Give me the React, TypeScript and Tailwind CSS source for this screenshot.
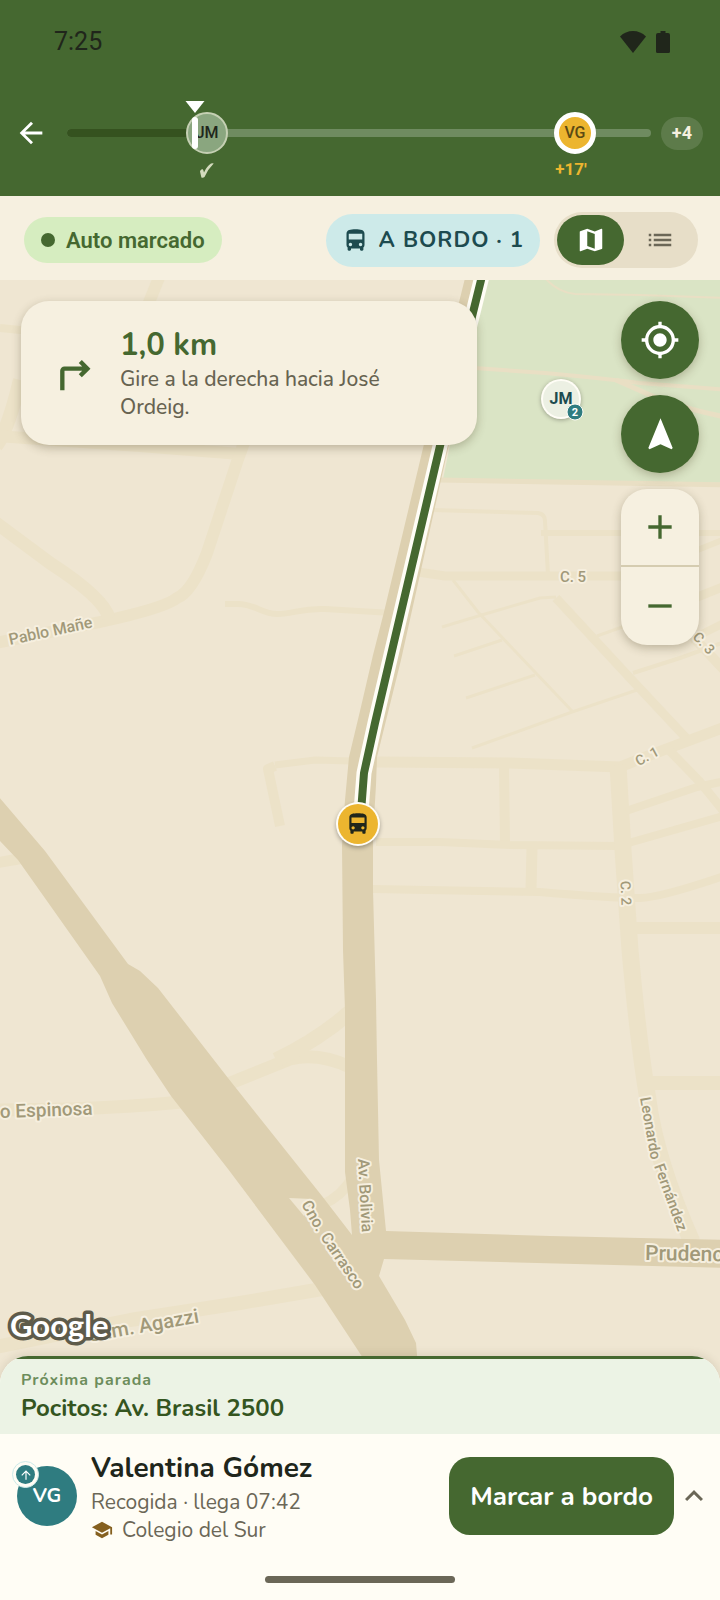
import { MdArrowBack, MdDirectionsBus, MdMap, MdList, MdTurnRight, MdMyLocation, MdNavigation, MdAdd, MdRemove, MdSchool, MdKeyboardArrowUp, MdArrowUpward } from "react-icons/md";

const minorRoads: [string, number][] = [
  ["M162 270 L146 310", 12],
  ["M0 328 L30 331", 8],
  ["M20 380 Q8 430 -4 446", 14],
  ["M-4 436 L140 446 L240 454", 12],
  ["M245 440 L237 462 L207 553 Q192 592 177 598 Q165 608 100 622 L-4 643", 12],
  ["M-4 523 L50 563 Q104 598 109 618", 13],
  ["M225 604 L238 604 C255 604 262 614 277 614 C295 614 300 608 325 609 L392 613", 6],
  ["M352 761 L315 760 L275 765", 7],
  ["M275 766 L268 769 L280 826", 10],
  ["M-4 863 L24 858", 11],
  ["M-4 1110 L70 1109 Q130 1107 182 1102", 13],
  ["M228 1084 L290 1059 Q318 1052 350 1067", 13],
  ["M276 1060 Q318 1040 350 1012", 15],
  ["M322 1205 Q342 1196 352 1178", 10],
  ["M-4 1347 L130 1320 L240 1303 L322 1289", 14],
  ["M432 510 L538 513 Q545 514 545 521 L548 575", 4],
  ["M541 533 L730 533", 6],
  ["M418 572 L445 576 L640 576", 9],
  ["M695 551 L730 537", 6],
  ["M690 600 L730 584", 9],
  ["M690 640 L730 620", 8],
  ["M453 580 L478 612 L572 711", 3],
  ["M442 627 L485 614 L540 598 L556 597", 3],
  ["M556 598 L630 678 L688 740", 9],
  ["M454 656 L502 640", 3],
  ["M466 698 L535 675", 3],
  ["M472 748 L572 712 L637 690", 3],
  ["M597 636 L625 626", 3],
  ["M633 673 L680 658 L730 640", 4],
  ["M696 640 L728 674", 10],
  ["M376 762 L510 763 L620 767 L645 757 L730 725", 11],
  ["M504 766 L505 842", 10],
  ["M376 842 L440 842 L510 845 L618 846 L730 814", 8],
  ["M532 848 L531 890", 11],
  ["M372 889 L540 892 Q610 898 640 898 Q660 898 730 874", 8],
  ["M618 765 L623 850 L630 950 Q638 1040 648 1100 Q656 1160 692 1242", 17],
  ["M634 928 L730 928", 12],
  ["M652 1083 L730 1083", 14],
  ["M626 811 L697 787 L730 780", 8],
  ["M667 748 L700 782 L726 814", 9],
];

const labelClass =
  "fill-[#a19979] stroke-[#f6efdf] stroke-[4px] [paint-order:stroke] [stroke-linejoin:round] font-[Roboto,sans-serif] font-medium";

function MapCanvas() {
  return (
    <svg
      className="absolute inset-0 h-full w-full"
      viewBox="0 280 720 1100"
      preserveAspectRatio="xMidYMid slice"
      role="img"
      aria-label="Mapa de la ruta"
    >
      <rect x="-400" y="0" width="1600" height="1800" fill="#efe6d2" />
      <g fill="none" stroke="#ece2c8">
        {minorRoads.map(([d, w]) => (
          <path key={d} d={d} strokeWidth={w} strokeLinejoin="round" />
        ))}
      </g>
      <path d="M486 270 H730 V483 L443 479 Z" fill="#dae4c5" />
      <g fill="none" stroke="#e9dfc4">
        <path d="M440 480 L730 485" strokeWidth="5" />
        <path d="M542 274 Q555 292 575 294 L640 295 L730 298" strokeWidth="2" />
        <path d="M460 367 L545 373 Q600 378 640 383 L730 390" strokeWidth="4" />
        <path d="M616 380 L650 395 Q680 408 730 418" strokeWidth="5" />
      </g>
      <g fill="#ddd0b0">
        <path d="M-2 796 L45 851 L128 964 L140 971 L158 988 L228 1078 L322 1196 L352 1235 L350 1210 L345 1172 L345 1010 L343 950 L342 845 L345 800 L349 757 L360 711 L373 655 L384 612 L424 444 L467 270 H490 L449 444 L401 660 L377 757 L376 785 L373 835 L373 890 L376 1000 L377 1060 L379 1160 L386 1231 L550 1236 L730 1240 V1268 L384 1259 L379 1276 L405 1320 L416 1343 L420 1390 H384 L315 1285 L228 1169 L171 1096 L147 1060 L112 1003 L100 976 L18 860 L-2 839 Z" />
      </g>
      <path d="M289 1198 L312 1199 L304 1216 Z" fill="#efe6d2" />
      <g fill="none" strokeLinejoin="round">
        <path d="M484 268 L440 446 L375 723 L364 773 L361 812" stroke="#fffdf6" strokeWidth="15" />
        <path d="M484 268 L440 446 L375 723 L364 773 L361 812" stroke="#456830" strokeWidth="8" />
      </g>

      <g className={labelClass}>
        <text x="10" y="645" fontSize="16" transform="rotate(-12 10 645)">Pablo Mañe</text>
        <text x="573" y="582" fontSize="15" textAnchor="middle">C. 5</text>
        <text x="704" y="648" fontSize="14" textAnchor="middle" transform="rotate(48 704 643)">C. 3</text>
        <text x="647" y="761" fontSize="14" textAnchor="middle" transform="rotate(-28 647 756)">C. 1</text>
        <text x="626" y="898" fontSize="14" textAnchor="middle" transform="rotate(88 626 893)">C. 2</text>
        <text x="0" y="1118" fontSize="19" transform="rotate(-2 0 1118)">o Espinosa</text>
        <text x="89" y="1342" fontSize="20" transform="rotate(-10 89 1342)">Cam. Agazzi</text>
        <text x="645" y="1260" fontSize="21" transform="rotate(1 645 1260)">Prudenc</text>
        <text x="358" y="1159" fontSize="16" transform="rotate(87 358 1159)">Av. Bolivia</text>
        <text x="640" y="1098" fontSize="15" transform="rotate(80 640 1098)">Leonardo</text>
        <text x="654" y="1166" fontSize="15" transform="rotate(70 654 1166)">Fernández</text>
        <text x="301" y="1204" fontSize="16" transform="rotate(61 301 1204)">Cno.</text>
        <text x="320" y="1237" fontSize="16" transform="rotate(56 320 1237)">Carrasco</text>
      </g>
      <text
        x="10"
        y="1337"
        fontSize="31"
        className="fill-white stroke-[#5e5b4b] stroke-[7px] [paint-order:stroke] [stroke-linejoin:round] font-[Lato,sans-serif] font-bold"
      >
        Google
      </text>

      <g className="drop-shadow-[0_1px_2px_rgba(0,0,0,0.3)]">
        <circle cx="561" cy="399" r="20" fill="#fffdf6" />
      </g>
      <circle cx="561" cy="399" r="18" fill="#ecf0e3" />
      <text x="561" y="404" fontSize="16" textAnchor="middle" className="fill-[#1d4b4f] font-[Roboto,sans-serif] font-bold">JM</text>
      <circle cx="575" cy="412" r="8" fill="#2f7c80" stroke="#fffdf6" strokeWidth="1" />
      <text x="575" y="416" fontSize="11" textAnchor="middle" className="fill-white font-[Roboto,sans-serif] font-bold">2</text>

      <g className="drop-shadow-[0_2px_2px_rgba(0,0,0,0.3)]">
        <circle cx="358" cy="824" r="22" fill="#fffdf6" />
      </g>
      <circle cx="358" cy="824" r="20" fill="#ecb52f" />
      <MdDirectionsBus x="345" y="811" size={26} color="#20261b" />
    </svg>
  );
}

function Header() {
  return (
    <header className="bg-[#456830] pb-[14px]">
      <div className="flex h-[84px] items-center justify-between pr-[50px] pl-[54px] font-[Roboto,sans-serif] text-[#20261b]">
        <time className="text-[25px]">7:25</time>
        <div className="flex items-center gap-[10px]">
          <svg className="h-[22px] w-[26px]" viewBox="0 0 26 22" fill="#20261b" aria-hidden="true">
            <path d="M13 22 L0 5.500 Q5.500 0 13 0 T26 5.500 Z" />
          </svg>
          <svg className="h-[22px] w-[14px]" viewBox="0 0 14 22" fill="#20261b" aria-hidden="true">
            <path d="M4.500 0 H9.500 V2 H12 Q14 2 14 4 V20.500 Q14 22 12.500 22 H1.500 Q0 22 0 20.500 V4 Q0 2 2 2 H4.500 Z" />
          </svg>
        </div>
      </div>
      <div className="flex h-[98px] items-center pr-[17px] pl-[14px] font-[Roboto,sans-serif]">
        <button type="button" aria-label="Volver" className="mr-[19px] text-white">
          <MdArrowBack size={34} />
        </button>
        <div className="relative h-2 flex-1 rounded-full bg-[#6f8b60]">
          <div className="h-2 w-[22%] rounded-full bg-[#35521f]" />
          <div className="absolute top-1/2 left-[24%] flex size-[42px] -translate-x-1/2 -translate-y-1/2 items-center justify-center rounded-full border-2 border-[#c5d0b3] bg-[#8aa67f] text-base font-medium text-[#20261b]">
            JM
          </div>
          <svg className="absolute top-[34px] left-[24%] h-[16px] w-[14px] -translate-x-1/2" viewBox="0 0 14 16" aria-hidden="true">
            <path d="M0 8.500 Q0 7 2.200 6 Q3.400 6.300 4 9.400 Q7 3 11 0.600 Q13 -0.200 13.700 0.500 Q8 6 4.500 14 Q3 15.300 1.400 14.500 Z" fill="#d3dbbd" />
          </svg>
          <div className="absolute top-1/2 left-[22%] h-8 w-[6px] -translate-x-1/2 -translate-y-1/2 rounded-sm bg-white" />
          <svg className="absolute -top-[28px] left-[22%] h-3 w-5 -translate-x-1/2" viewBox="0 0 20 12" fill="#fff" aria-hidden="true">
            <path d="M0.500 0 H19.500 L10 12 Z" />
          </svg>
          <div className="absolute top-1/2 left-[87%] flex size-[42px] -translate-x-1/2 -translate-y-1/2 items-center justify-center rounded-full border-[5px] border-white bg-[#ecb52f] text-base font-medium text-[#5b4a14]">
            VG
          </div>
          <span className="absolute top-[30px] left-[87%] -ml-1 -translate-x-1/2 text-[17px] leading-5 font-bold text-[#ecb52f]">+17'</span>
        </div>
        <span className="ml-[10px] flex h-[33px] items-center rounded-full bg-[#5d7b4a] px-[11px] text-lg font-bold text-[#f6f0e0]">+4</span>
      </div>
    </header>
  );
}

function Toolbar() {
  return (
    <div className="flex items-center bg-[#f6f0e0] pt-4 pr-[22px] pb-3 pl-6">
      <span className="flex h-[46px] items-center gap-[11px] rounded-full bg-[#d6edc0] px-[17px] font-[Roboto,sans-serif] text-[22px] font-semibold text-[#456830]">
        <i className="size-[14px] rounded-full bg-[#456830]" />
        Auto marcado
      </span>
      <span className="ml-auto flex h-[53px] items-center gap-[10px] rounded-full bg-[#cdeae9] px-4 font-[Nunito,Lato,sans-serif] text-[22px] font-bold tracking-[1px] text-[#1d4b4f]">
        <MdDirectionsBus size={27} />
        A BORDO · 1
      </span>
      <div className="ml-[14px] flex h-14 items-center rounded-full bg-[#e7dec8] px-[3px]">
        <button type="button" aria-label="Mapa" aria-pressed="true" className="flex h-[50px] w-[67px] items-center justify-center rounded-full bg-[#456830] text-white">
          <MdMap size={30} />
        </button>
        <button type="button" aria-label="Lista" aria-pressed="false" className="flex h-[50px] w-[71px] items-center justify-center rounded-full text-[#6b6757]">
          <MdList size={30} />
        </button>
      </div>
    </div>
  );
}

const shadow = "shadow-[0_3px_10px_rgba(70,60,30,0.3)]";

function MapSection() {
  return (
    <main className="relative -mb-6 flex-1 overflow-hidden">
      <MapCanvas />
      <div className="relative flex items-start justify-between p-[21px]">
        <section className={`flex w-[456px] items-center gap-[23px] rounded-[28px] bg-[#f6f0e0] p-6 font-[Nunito,Lato,sans-serif] ${shadow}`}>
          <MdTurnRight size={52} className="shrink-0 text-[#456830]" />
          <div>
            <p className="text-[31px] leading-10 font-bold text-[#456830]">1,0 km</p>
            <p className="text-[21px] leading-7 font-medium text-[#676351]">Gire a la derecha hacia José Ordeig.</p>
          </div>
        </section>
        <div className="flex w-[78px] flex-col gap-4">
          <button type="button" aria-label="Mi ubicación" className={`flex h-[78px] items-center justify-center rounded-full bg-[#456830] text-white ${shadow}`}>
            <MdMyLocation size={40} />
          </button>
          <button type="button" aria-label="Orientar" className={`flex h-[78px] items-center justify-center rounded-full bg-[#456830] text-white ${shadow}`}>
            <MdNavigation size={39} />
          </button>
          <div className={`flex flex-col rounded-[26px] bg-[#f6f0e0] text-[#456830] ${shadow}`}>
            <button type="button" aria-label="Acercar" className="flex h-[78px] items-center justify-center border-b-2 border-[#d5ccb0]">
              <MdAdd size={40} />
            </button>
            <button type="button" aria-label="Alejar" className="flex h-[78px] items-center justify-center">
              <MdRemove size={40} />
            </button>
          </div>
        </div>
      </div>
    </main>
  );
}

function StopSheet() {
  return (
    <footer className="relative overflow-hidden rounded-t-[28px] bg-[#fffdf5] font-[Nunito,Lato,sans-serif] shadow-[0_-2px_8px_rgba(70,60,30,0.12)]">
      <div className="h-[78px] border-t-[3px] border-[#456830] bg-[#ecf3e5] px-[21px] pt-[11px]">
        <p className="text-base leading-5 font-bold tracking-[1px] text-[#6d8d5c]">Próxima parada</p>
        <p className="text-2xl leading-9 font-bold text-[#34551f]">Pocitos: Av. Brasil 2500</p>
      </div>
      <div className="flex h-[124px] items-center pr-2 pl-[17px]">
        <div className="relative flex size-[60px] shrink-0 items-center justify-center rounded-full bg-[#2f7c80] text-xl font-bold text-white">
          VG
          <span className="absolute -top-[5px] -left-[5px] flex size-[27px] items-center justify-center rounded-full border border-[#cdeae9] bg-[#fffdf5]">
            <span className="flex size-[19px] items-center justify-center rounded-full bg-[#2f7c80]">
              <MdArrowUpward size={14} />
            </span>
          </span>
        </div>
        <div className="ml-[14px] flex-1">
          <h1 className="text-[28px] leading-10 font-bold text-[#20261b]">Valentina Gómez</h1>
          <p className="text-[21px] leading-7 text-[#6b6757]">Recogida · llega 07:42</p>
          <p className="flex items-center gap-[9px] text-[21px] leading-7 text-[#6b6757]">
            <MdSchool size={22} className="text-[#85601f]" />
            Colegio del Sur
          </p>
        </div>
        <button type="button" className="h-[78px] rounded-[21px] bg-[#456830] px-[21px] text-[26px] font-bold text-white">Marcar a bordo</button>
        <button type="button" aria-label="Mostrar más" className="ml-[2px] text-[#6b6757]">
          <MdKeyboardArrowUp size={36} />
        </button>
      </div>
      <div className="flex h-[42px] items-center justify-center">
        <div className="h-[7px] w-[190px] rounded-full bg-[#6b6757]" />
      </div>
    </footer>
  );
}

export default function App() {
  return (
    <div className="flex min-h-screen flex-col bg-[#fffdf5]">
      <Header />
      <Toolbar />
      <MapSection />
      <StopSheet />
    </div>
  );
}
